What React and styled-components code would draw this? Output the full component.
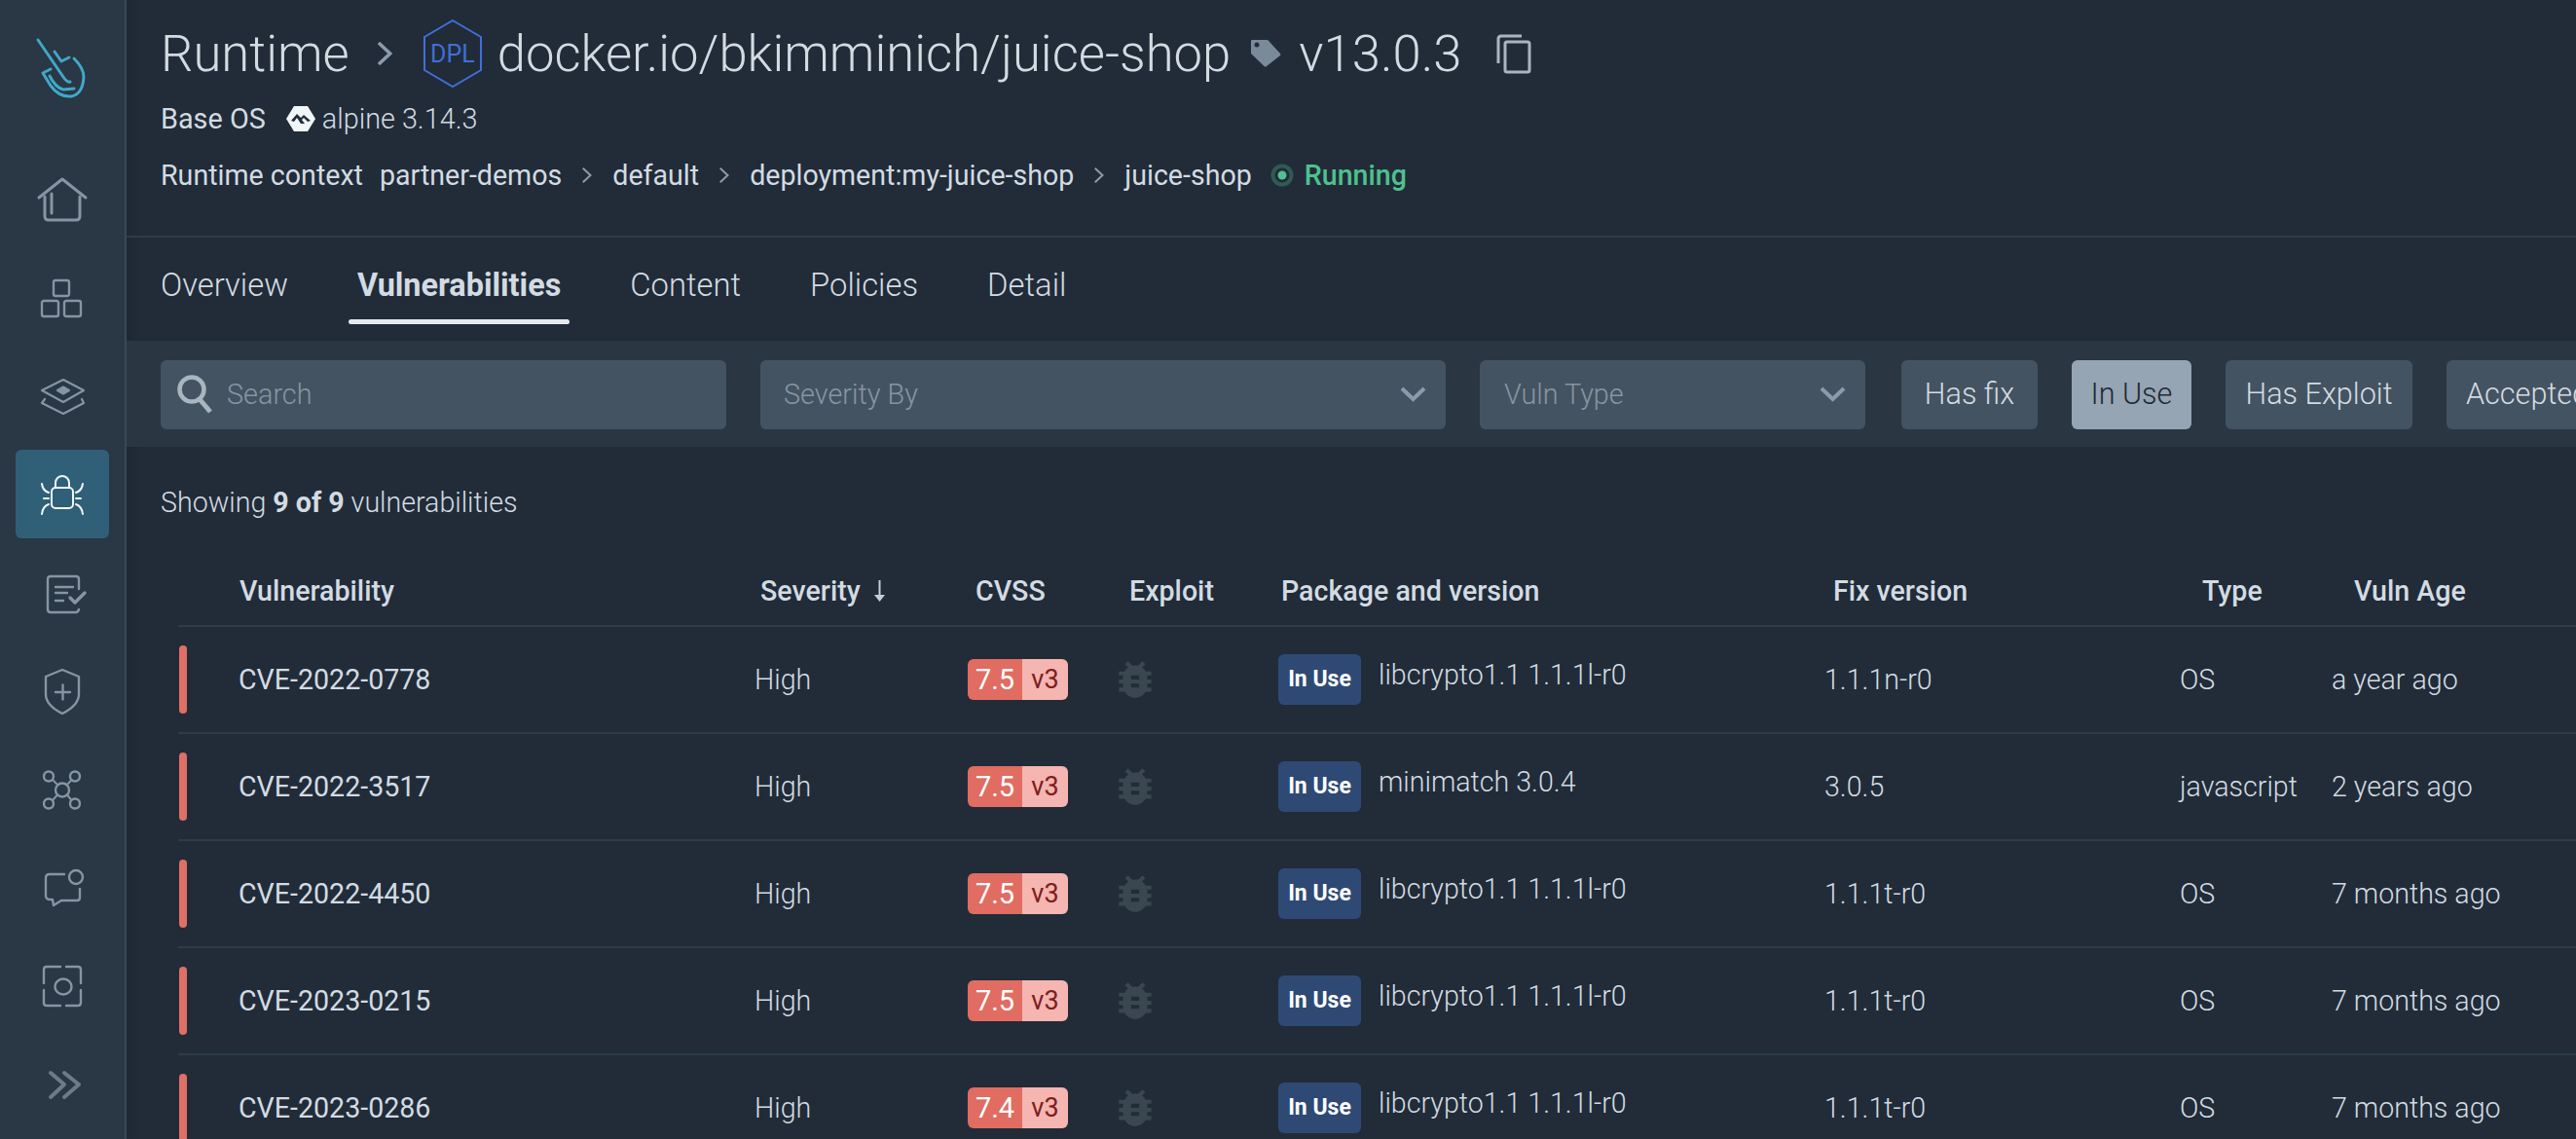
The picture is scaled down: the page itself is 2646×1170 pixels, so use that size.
import styled, { createGlobalStyle } from 'styled-components';
import { MdBugReport } from 'react-icons/md';

const GlobalStyle = createGlobalStyle`
    html, body {
        margin: 0;
        height: 100%;
        overflow: hidden;
        background: #212c38;
    }
    * {
        box-sizing: border-box;
    }
`

const vulns = [
    { id: 'CVE-2022-0778', score: '7.5', pkg: 'libcrypto1.1 1.1.1l-r0', fix: '1.1.1n-r0', type: 'OS', age: 'a year ago' },
    { id: 'CVE-2022-3517', score: '7.5', pkg: 'minimatch 3.0.4', fix: '3.0.5', type: 'javascript', age: '2 years ago' },
    { id: 'CVE-2022-4450', score: '7.5', pkg: 'libcrypto1.1 1.1.1l-r0', fix: '1.1.1t-r0', type: 'OS', age: '7 months ago' },
    { id: 'CVE-2023-0215', score: '7.5', pkg: 'libcrypto1.1 1.1.1l-r0', fix: '1.1.1t-r0', type: 'OS', age: '7 months ago' },
    { id: 'CVE-2023-0286', score: '7.4', pkg: 'libcrypto1.1 1.1.1l-r0', fix: '1.1.1t-r0', type: 'OS', age: '7 months ago' },
];

const columns = [
    { label: 'Vulnerability', shift: 1 },
    { label: 'Severity', shift: 6, sorted: true },
    { label: 'CVSS', shift: 8 },
    { label: 'Exploit', shift: 10 },
    { label: 'Package and version', shift: 3 },
    { label: 'Fix version', shift: 9 },
    { label: 'Type', shift: 23 },
    { label: 'Vuln Age', shift: 23 },
];

const NavIcon = ({ children, color = '#8595a3', width = 2.4 }) => (
    <svg width="64" height="64" viewBox="-32 -32 64 64" fill="none" stroke={color} strokeWidth={width} strokeLinecap="round" strokeLinejoin="round">
        {children}
    </svg>
);

const navItems = [
    <NavIcon key="home" width={3}>
        <path d="M-24 -2 L0 -21 L24 -2" />
        <path d="M-18 -3 V17 Q-18 21 -14 21 H14 Q18 21 18 17 V-3" />
        <path d="M-11 -6 V14" />
    </NavIcon>,
    <NavIcon key="blocks">
        <rect x="-9" y="-18" width="16" height="16" rx="2" />
        <rect x="-21" y="3" width="17" height="16" rx="2" />
        <rect x="2" y="3" width="17" height="16" rx="2" />
    </NavIcon>,
    <NavIcon key="layers" width={2.2}>
        <path d="M-21 -6 L1 -17 L22 -6 L1 6 Z" />
        <path d="M-5 -6 L1 -9.5 L7 -6 L1 -2.5 Z" fill="#8595a3" />
        <path d="M-18 3 L-21 7 L1 18 L22 7 L20 3" />
    </NavIcon>,
    <NavIcon key="bug" color="#f2f5f7" width={2}>
        <rect x="-11" y="-7" width="22" height="21" rx="4" />
        <path d="M-7 -7 V-12 a7 7 0 0 1 14 0 V-7" />
        <path d="M-21 -11 Q-20 -4 -14 -2 M-19 4 H-14 M-21 20 Q-20 12 -14 10" />
        <path d="M21 -11 Q20 -4 14 -2 M19 4 H14 M21 20 Q20 12 14 10" />
    </NavIcon>,
    <NavIcon key="report">
        <path d="M17 -4 V-14 Q17 -17 14 -17 H-12 Q-15 -17 -15 -14 V17 Q-15 20 -12 20 H14 Q16 20 17 17" />
        <path d="M-7 -6 H11 M-7 0 H5 M-7 8 H1" />
        <path d="M8 5 L13 10 L23 0" strokeWidth="3.4" />
    </NavIcon>,
    <NavIcon key="shield">
        <path d="M0 -22 L17 -15 V3 C17 13 8 19 0 23 C-8 19 -17 13 -17 3 V-15 Z" />
        <path d="M-7 1 H8 M0.5 -6.5 V8.5" />
    </NavIcon>,
    <NavIcon key="network">
        <circle cx="0" cy="0.5" r="7" />
        <circle cx="-14" cy="-13.5" r="5" />
        <circle cx="13" cy="-13.5" r="5" />
        <circle cx="-14" cy="14.5" r="5" />
        <circle cx="13" cy="14.5" r="5" />
        <path d="M-5 -5 L-10 -10 M5 -5 L9.5 -10 M-5 5.5 L-10 11 M5 5.5 L9.5 11" strokeWidth="2" />
    </NavIcon>,
    <NavIcon key="chat">
        <circle cx="14" cy="-11" r="7" />
        <path d="M2 -14 H-13 Q-17 -14 -17 -10 V8 Q-17 12 -13 12 H-10 L-9 18 L-1 13 H15 Q18 13 18 10 V1" />
    </NavIcon>,
    <NavIcon key="scan">
        <ellipse cx="1" cy="0.5" rx="8.5" ry="8" />
        <path d="M-19 -3 V-17 Q-19 -20 -16 -20 H-2 M4 -20 H16 Q19 -20 19 -17 V-3 M19 4 V17 Q19 20 16 20 H4 M-2 20 H-16 Q-19 20 -19 17 V4" />
    </NavIcon>,
    <NavIcon key="more" color="#6d7b88" width={4}>
        <path d="M-12 -12 L2 0 L-12 13 M2 -12 L17 0 L2 13" />
    </NavIcon>,
];

const Logo = () => (
    <svg width="70" height="80" viewBox="30 30 70 80" fill="none" stroke="#3fa9c9" strokeWidth="3" strokeLinecap="round" strokeLinejoin="round">
        <path d="M40 41 L66 79 Q70 85 73 84" />
        <path d="M57 53 L64 63 L72 59" />
        <path d="M77 60 Q87 70 87 79 Q86 97 74 99 Q62 100 53 88 L45 75 L53 71" />
        <path d="M52 78 Q58 90 66 92 L77 91" />
    </svg>
);

const Chevron = ({ size = 10, color = '#8c9bab', weight = 2 }) => (
    <svg width={size} height={size * 1.6} viewBox="0 0 10 16" fill="none" stroke={color} strokeWidth={weight} strokeLinecap="square">
        <path d="M1.5 1.5 L8.5 8 L1.5 14.5" />
    </svg>
);

const SelectArrow = () => (
    <svg width="27" height="16" viewBox="0 0 27 16" fill="none" stroke="#8c9bab" strokeWidth="4">
        <path d="M2 2 L13.5 13 L25 2" />
    </svg>
);

const SearchIcon = () => (
    <svg width="40" height="40" viewBox="0 0 40 40" fill="none" stroke="#a9b5bf">
        <circle cx="18" cy="15" r="12.5" strokeWidth="4.5" />
        <path d="M26 25 L37 38" strokeWidth="5" />
    </svg>
);

const TagIcon = () => (
    <svg width="32" height="30" viewBox="0 0 32 30">
        <path d="M2 1 H17 Q19 1 20 3 L31 15 Q32 16 31 17 L17 28 Q15.5 29 14.5 28 L1 15 V2 Q1 1 2 1 Z" fill="#7a8a99" />
        <circle cx="7" cy="6" r="2.5" fill="#212c38" />
    </svg>
);

const CopyIcon = () => (
    <svg width="36" height="41" viewBox="0 0 36 41" fill="none" stroke="#a9b5bf" strokeWidth="3">
        <path d="M26 2 H5 Q2 2 2 5 V30" />
        <rect x="9" y="8" width="25" height="31" rx="2" />
    </svg>
);

const AlpineIcon = () => (
    <svg width="30" height="26" viewBox="0 0 30 26">
        <path d="M8 0 H22 L30 13 L22 26 H8 L0 13 Z" fill="#f2f5f7" />
        <path d="M5 15 L11 8 L15 12 L18 9 L25 15 L22 16 L18 12 L16 14 L19 18 H15 L11 12 L8 16 Z" fill="#212c38" />
    </svg>
);

const RunningIcon = () => (
    <svg width="24" height="24" viewBox="0 0 24 24">
        <circle cx="12" cy="12" r="9.5" fill="none" stroke="#2f5a55" strokeWidth="4" />
        <circle cx="12" cy="12" r="4.5" fill="#4fc08f" />
    </svg>
);

const SortArrow = () => (
    <svg width="11" height="22" viewBox="0 0 11 22">
        <path d="M5.5 0 V17" stroke="#c5ced6" strokeWidth="2" />
        <path d="M0 15 H11 L5.5 22 Z" fill="#c5ced6" />
    </svg>
);

const App = () => {
    return (
        <Page>
            <GlobalStyle />
            <Sidebar>
                <LogoBox><Logo /></LogoBox>
                {navItems.map((icon, i) => (
                    <NavItem key={i}>
                        <NavButton $active={i === 3}>{icon}</NavButton>
                    </NavItem>
                ))}
            </Sidebar>
            <Main>
                <Header>
                    <TitleRow>
                        <span>Runtime</span>
                        <TitleChevron><Chevron size={15} weight={2.4} /></TitleChevron>
                        <Hexagon>
                            <svg width="62" height="70" viewBox="0 0 62 70" fill="none" stroke="#3f6fd8" strokeWidth="2">
                                <path d="M31 1 L60 18 V52 L31 69 L2 52 V18 Z" />
                            </svg>
                            <HexLabel>DPL</HexLabel>
                        </Hexagon>
                        <ImageName>docker.io/bkimminich/juice-shop</ImageName>
                        <TagSlot><TagIcon /></TagSlot>
                        <span>v13.0.3</span>
                        <CopySlot><CopyIcon /></CopySlot>
                    </TitleRow>
                    <BaseRow>
                        <span>Base OS</span>
                        <AlpineIcon />
                        <AlpineName>alpine 3.14.3</AlpineName>
                    </BaseRow>
                    <ContextRow>
                        <span>Runtime context</span>
                        <Crumb>partner-demos</Crumb>
                        <Chevron />
                        <span>default</span>
                        <Chevron />
                        <span>deployment:my-juice-shop</span>
                        <Chevron />
                        <span>juice-shop</span>
                        <Status><RunningIcon />Running</Status>
                    </ContextRow>
                </Header>
                <Tabs>
                    {['Overview', 'Vulnerabilities', 'Content', 'Policies', 'Detail'].map((tab) => (
                        <Tab key={tab} $active={tab === 'Vulnerabilities'}>
                            {tab}
                            {tab === 'Vulnerabilities' && <Underline />}
                        </Tab>
                    ))}
                </Tabs>
                <FilterBar>
                    <SearchBox>
                        <SearchIcon />
                        <Placeholder>Search</Placeholder>
                    </SearchBox>
                    <Select $width={704} $pad={24}>
                        <Placeholder>Severity By</Placeholder>
                        <SelectArrow />
                    </Select>
                    <Select $width={396} $pad={25}>
                        <Placeholder>Vuln Type</Placeholder>
                        <SelectArrow />
                    </Select>
                    <HasFix $width={140}>Has fix</HasFix>
                    <Toggle $width={123} $on>In Use</Toggle>
                    <Toggle $width={192}>Has Exploit</Toggle>
                    <Toggle $width={166}>Accepted</Toggle>
                </FilterBar>
                <Showing>Showing <b>9 of 9</b> vulnerabilities</Showing>
                <Table>
                    <HeadRow>
                        <span />
                        {columns.map((c) => (
                            <HeadCell key={c.label} $shift={c.shift}>
                                {c.label}
                                {c.sorted && <SortArrow />}
                            </HeadCell>
                        ))}
                    </HeadRow>
                    {vulns.map((v) => (
                        <Row key={v.id}>
                            <SeverityBar />
                            <CveId>{v.id}</CveId>
                            <Cell>High</Cell>
                            <Score>
                                <ScoreValue>{v.score}</ScoreValue>
                                <ScoreVersion>v3</ScoreVersion>
                            </Score>
                            <ExploitIcon><MdBugReport size={50} /></ExploitIcon>
                            <PackageCell>
                                <InUse>In Use</InUse>
                                <PackageName>{v.pkg}</PackageName>
                            </PackageCell>
                            <Cell>{v.fix}</Cell>
                            <Cell>{v.type}</Cell>
                            <Cell>{v.age}</Cell>
                        </Row>
                    ))}
                </Table>
            </Main>
        </Page>
    )
}

const Page = styled.div`
    display: flex;
    width: 2646px;
    height: 1170px;
    overflow: hidden;
    background: #212c38;
    color: #d3dbe2;
    font-family: Roboto, "Liberation Sans", sans-serif;
`

const Sidebar = styled.nav`
    flex: 0 0 130px;
    display: flex;
    flex-direction: column;
    background: #2a3744;
    border-right: 2px solid #3a4856;
    box-shadow: 4px 0 10px rgba(0, 0, 0, 0.12);
`

const LogoBox = styled.div`
    height: 154px;
    padding-top: 30px;
    display: flex;
    justify-content: center;
`

const NavItem = styled.div`
    height: 101px;
    flex: 0 0 101px;
    display: flex;
    align-items: center;
    justify-content: center;
`

const NavButton = styled.div`
    width: 96px;
    height: 91px;
    border-radius: 6px;
    display: flex;
    align-items: center;
    justify-content: center;
    background: ${(p) => (p.$active ? '#2f6078' : 'transparent')};
`

const Main = styled.main`
    flex: 1;
    min-width: 0;
    overflow: hidden;
`

const Header = styled.header`
    height: 244px;
    padding: 20px 0 0 35px;
    border-bottom: 2px solid #2d3b4a;
`

const TitleRow = styled.div`
    display: flex;
    align-items: center;
    height: 70px;
    font-size: 52.6px;
    font-weight: 300;
    white-space: nowrap;
`

const TitleChevron = styled.span`
    display: flex;
    margin: 0 31px 0 29px;
`

const Hexagon = styled.div`
    display: grid;
    place-items: center;
    width: 62px;
    height: 70px;
    > * {
        grid-area: 1 / 1;
    }
`

const HexLabel = styled.span`
    font-size: 25px;
    font-weight: 400;
    color: #3f6fd8;
`

const ImageName = styled.span`
    margin-left: 15px;
`

const TagSlot = styled.span`
    display: flex;
    margin: 0 18px 0 20px;
`

const CopySlot = styled.span`
    display: flex;
    margin-left: 36px;
`

const BaseRow = styled.div`
    display: flex;
    align-items: center;
    height: 34px;
    margin-top: 15px;
    font-size: 28.8px;
    gap: 21px;
`

const AlpineName = styled.span`
    margin-left: -14px;
    font-weight: 300;
`

const ContextRow = styled.div`
    display: flex;
    align-items: center;
    height: 34px;
    margin-top: 24px;
    font-size: 28.6px;
    gap: 21px;
    white-space: nowrap;
`

const Crumb = styled.span`
    margin-left: -4px;
`

const Status = styled.span`
    display: flex;
    align-items: center;
    gap: 11px;
    font-weight: 500;
    color: #4fc08f;
    margin-left: -2px;
`

const Tabs = styled.div`
    display: flex;
    gap: 53px;
    height: 106px;
    padding-left: 26px;
`

const Tab = styled.div`
    display: flex;
    flex-direction: column;
    padding: 29px 9px 0;
    font-size: ${(p) => (p.$active ? 32.4 : 32.8)}px;
    line-height: 40px;
    font-weight: ${(p) => (p.$active ? 700 : 300)};
`

const Underline = styled.div`
    height: 5px;
    margin: 15px -9px 0;
    border-radius: 3px;
    background: #e5e9ed;
`

const FilterBar = styled.div`
    display: flex;
    align-items: center;
    gap: 35px;
    height: 109px;
    padding: 2px 0 0 35px;
    background: #2a3642;
`

const Field = styled.div`
    flex: 0 0 auto;
    display: flex;
    align-items: center;
    height: 71px;
    padding-bottom: 2px;
    border-radius: 6px;
    background: #445361;
`

const SearchBox = styled(Field)`
    width: 581px;
    padding-left: 14px;
    gap: 14px;
`

const Select = styled(Field)`
    width: ${(p) => p.$width}px;
    padding-left: ${(p) => p.$pad}px;
    padding-right: 20px;
    justify-content: space-between;
`

const Placeholder = styled.span`
    font-size: 28.8px;
    font-weight: 300;
    color: #8795a3;
`

const Toggle = styled(Field)`
    width: ${(p) => p.$width}px;
    font-size: 30.6px;
    font-weight: 300;
    justify-content: center;
    white-space: nowrap;
    background: ${(p) => (p.$on ? '#96a5b3' : '#445361')};
    color: ${(p) => (p.$on ? '#1f2a36' : '#d3dbe2')};
`

const HasFix = styled(Toggle)`
    margin-left: 2px;
`

const Showing = styled.div`
    margin: 37px 0 0 35px;
    font-size: 28.6px;
    line-height: 40px;
    font-weight: 300;
    b {
        font-weight: 700;
    }
`

const Table = styled.div`
    margin: 37px 0 0 53px;
`

const gridColumns = '62px 530px 219px 156px 163px 561px 365px 156px 1fr';

const HeadRow = styled.div`
    display: grid;
    grid-template-columns: ${gridColumns};
    align-items: center;
    height: 71px;
    padding-bottom: 1px;
    border-bottom: 2px solid #2d3b4a;
    font-size: 28.6px;
    font-weight: 500;
`

const HeadCell = styled.div`
    display: flex;
    align-items: center;
    gap: 14px;
    padding-left: ${(p) => p.$shift}px;
`

const Row = styled.div`
    display: grid;
    grid-template-columns: ${gridColumns};
    align-items: center;
    height: 110px;
    border-bottom: 2px solid #2d3b4a;
    font-size: 28.6px;
    font-weight: 300;
`

const SeverityBar = styled.div`
    width: 8px;
    height: 70px;
    margin-left: 1px;
    border-radius: 4px;
    background: #e06f65;
`

const CveId = styled.div`
    font-weight: 400;
`

const Cell = styled.div`
    white-space: nowrap;
`

const Score = styled.div`
    display: flex;
    width: 103px;
    height: 42px;
    border-radius: 6px;
    overflow: hidden;
    line-height: 42px;
    text-align: center;
`

const ScoreValue = styled.span`
    width: 56px;
    background: #e06c62;
    color: #fff;
    font-size: 29px;
    font-weight: 400;
`

const ScoreVersion = styled.span`
    width: 47px;
    background: #f5b5b0;
    color: #7c2020;
    font-size: 27px;
    font-weight: 400;
`

const ExploitIcon = styled.div`
    display: flex;
    margin-left: -9px;
    color: #3a4650;
`

const PackageCell = styled.div`
    display: flex;
    align-items: center;
    gap: 18px;
`

const InUse = styled.span`
    width: 85px;
    height: 52px;
    border-radius: 6px;
    background: #2e4a74;
    color: #fff;
    font-size: 23px;
    font-weight: 700;
    line-height: 52px;
    text-align: center;
`

const PackageName = styled.span`
    margin-top: -10px;
    white-space: nowrap;
`

export default App;
